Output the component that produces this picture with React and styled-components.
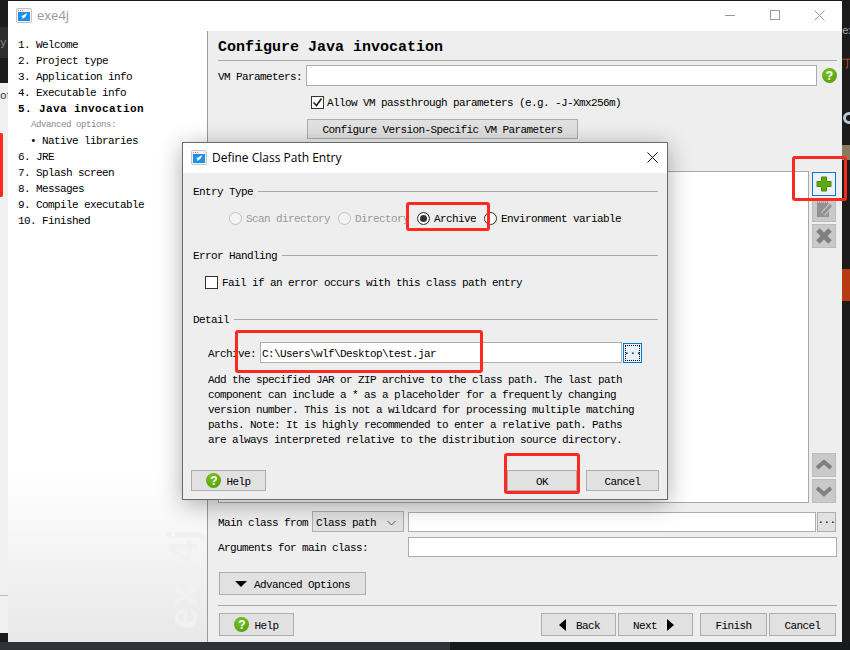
import * as React from 'react';
import styled, { createGlobalStyle } from 'styled-components';

const GlobalStyle = createGlobalStyle`
  * { box-sizing: border-box; }
  html, body { margin: 0; padding: 0; background: #1b1b1b; }
  body { font-family: 'Liberation Mono', monospace; font-size: 11px; letter-spacing: -0.6px; color: #000; }
`;

const steps = [
  { text: '1. Welcome' },
  { text: '2. Project type' },
  { text: '3. Application info' },
  { text: '4. Executable info' },
  { text: '5. Java invocation', kind: 'active' },
  { text: 'Advanced options:', kind: 'hint' },
  { text: '• Native libraries', kind: 'sub' },
  { text: '6. JRE' },
  { text: '7. Splash screen' },
  { text: '8. Messages' },
  { text: '9. Compile executable' },
  { text: '10. Finished' },
];

const helpText = [
  'Add the specified JAR or ZIP archive to the class path. The last path',
  'component can include a * as a placeholder for a frequently changing',
  'version number. This is not a wildcard for processing multiple matching',
  'paths. Note: It is highly recommended to enter a relative path. Paths',
  'are always interpreted relative to the distribution source directory.',
];

const AppIcon = () => (
  <svg width="16" height="15" viewBox="0 0 16 15">
    <rect x="0.5" y="0.5" width="15" height="14" rx="1" fill="#f4f4f4" stroke="#c4c4c4" />
    <rect x="2" y="4" width="12" height="9" fill="#1e90e8" />
    <rect x="2" y="2" width="1" height="1" fill="#e8705a" />
    <rect x="4" y="2" width="1" height="1" fill="#e8705a" />
    <rect x="6" y="2" width="1" height="1" fill="#e8705a" />
    <path d="M11 5 L7 7.5 L5 8 L6.5 9 L6 11 L8 10 L10 8 Z" fill="#fff" />
  </svg>
);

const WindowControls = () => (
  <Controls>
    <ControlSlot>
      <svg width="10" height="10" viewBox="0 0 10 10"><path d="M0 5.5H10" stroke="#999" /></svg>
    </ControlSlot>
    <ControlSlot>
      <svg width="10" height="10" viewBox="0 0 10 10"><rect x="0.5" y="0.5" width="9" height="9" fill="none" stroke="#999" /></svg>
    </ControlSlot>
    <ControlSlot>
      <svg width="11" height="11" viewBox="0 0 11 11"><path d="M0.5 0.5L10.5 10.5M10.5 0.5L0.5 10.5" stroke="#999" /></svg>
    </ControlSlot>
  </Controls>
);

const PlusIcon = () => (
  <svg width="16" height="16" viewBox="0 0 16 16">
    <path d="M5.5 1H10.5V5.5H15V10.5H10.5V15H5.5V10.5H1V5.5H5.5Z" fill="#5fa915" stroke="#4b8c0c" />
  </svg>
);

const EditIcon = () => (
  <svg width="18" height="18" viewBox="0 0 18 18">
    <rect x="2" y="2" width="12" height="14" fill="#939393" />
    <path d="M2 1.5H14" stroke="#939393" strokeDasharray="1 1" strokeWidth="2" />
    <path d="M16 4L8 13" stroke="#c8c8c8" strokeWidth="5" />
    <path d="M16 4L8 13" stroke="#939393" strokeWidth="3" />
  </svg>
);

const CrossIcon = () => (
  <svg width="18" height="18" viewBox="0 0 18 18">
    <path d="M3 3L15 15M15 3L3 15" stroke="#808080" strokeWidth="5" />
  </svg>
);

const ChevronIcon = ({ down }) => (
  <svg width="18" height="12" viewBox="0 0 18 12">
    <path d={down ? 'M2 3L9 9L16 3' : 'M2 9L9 3L16 9'} fill="none" stroke="#808080" strokeWidth="4" />
  </svg>
);

const SmallChevron = () => (
  <svg width="9" height="6" viewBox="0 0 9 6">
    <path d="M0.5 1L4.5 5L8.5 1" fill="none" stroke="#555" />
  </svg>
);

const Check = () => (
  <svg width="11" height="11" viewBox="0 0 11 11">
    <path d="M1.5 5.5L4.5 8.5L9.5 1.5" fill="none" stroke="#222" strokeWidth="1.6" />
  </svg>
);

const App = () => (
  <>
    <GlobalStyle />
    <Screen>
      <LeftStrip>
        <StripBlock $h={27} $bg="#1c1c1c" />
        <StripBlock $h={31} $bg="#2d2d2d"><StripText $color="#888">y</StripText></StripBlock>
        <StripBlock $h={25} $bg="#1c1c1c" />
        <StripLight>
          <StripText $color="#333">ot</StripText>
          <RedMark />
        </StripLight>
        <StripBlock $h={37} $bg="#f0f0f0" />
        <StripBlock $h={9} $bg="#1a1a1a" />
      </LeftStrip>

      <Window>
        <TitleBar>
          <AppIcon />
          <WindowTitle>exe4j</WindowTitle>
          <WindowControls />
        </TitleBar>
        <Body>
          <Sidebar>
            {steps.map((s) => (
              <Step key={s.text} $kind={s.kind}>{s.text}</Step>
            ))}
            <Watermark>exe4j</Watermark>
          </Sidebar>

          <Main>
            <Heading>Configure Java invocation</Heading>
            <VmRow>
              <VmLabel>VM Parameters:</VmLabel>
              <Field $w={511} $h={21} />
              <VmHelp>?</VmHelp>
            </VmRow>
            <PassRow>
              <CheckBox><Check /></CheckBox>
              <RowText>Allow VM passthrough parameters (e.g. -J-Xmx256m)</RowText>
            </PassRow>
            <ConfigButton>Configure Version-Specific VM Parameters</ConfigButton>

            <ClassPathRow>
              <ClassPathBox />
              <SideButtons>
                <SideButton $active><PlusIcon /></SideButton>
                <SideButton><EditIcon /></SideButton>
                <SideButton><CrossIcon /></SideButton>
                <SideSpacer />
                <SideButton><ChevronIcon /></SideButton>
                <SideButton><ChevronIcon down /></SideButton>
              </SideButtons>
            </ClassPathRow>

            <MainClassRow>
              <MainClassLabel>Main class from</MainClassLabel>
              <SelectBox>
                Class path
                <SmallChevron />
              </SelectBox>
              <Field $w={408} $h={20} />
              <DotsButton>...</DotsButton>
            </MainClassRow>
            <ArgsRow>
              <ArgsLabel>Arguments for main class:</ArgsLabel>
              <Field $w={429} $h={20} />
            </ArgsRow>

            <AdvancedButton>
              <Arrow $dir="down" />
              Advanced Options
            </AdvancedButton>
            <Separator />

            <Footer>
              <PushButton $w={75} $h={23}><ButtonHelp>?</ButtonHelp>Help</PushButton>
              <FooterRight>
                <PushButton $w={75} $h={23}><Arrow $dir="left" />Back</PushButton>
                <PushButton $w={75} $h={23}>Next<Arrow $dir="right" /></PushButton>
                <FinishGroup>
                  <PushButton $w={67} $h={23}>Finish</PushButton>
                  <PushButton $w={67} $h={23}>Cancel</PushButton>
                </FinishGroup>
              </FooterRight>
            </Footer>
          </Main>
        </Body>
      </Window>

      <RightStrip>
        <RightText $top={24} $color="#aaa">ex</RightText>
        <RightText $top={19} $color="#d8502a">丁</RightText>
        <RoundMark />
        <TanMark />
        <OrangeBlock />
      </RightStrip>

      <BottomStrip />

      <Dialog>
        <DialogTitleBar>
          <AppIcon />
          <DialogTitle>Define Class Path Entry</DialogTitle>
          <DialogClose>
            <svg width="11" height="11" viewBox="0 0 11 11"><path d="M0.5 0.5L10.5 10.5M10.5 0.5L0.5 10.5" stroke="#111" /></svg>
          </DialogClose>
        </DialogTitleBar>
        <DialogBody>
          <SectionHead>Entry Type</SectionHead>
          <RadioRow>
            <Radio $disabled /><RadioLabel $disabled>Scan directory</RadioLabel>
            <Radio $disabled /><RadioLabel $disabled>Directory</RadioLabel>
            <Radio $checked /><RadioLabel>Archive</RadioLabel>
            <Radio /><RadioLabel>Environment variable</RadioLabel>
          </RadioRow>

          <SectionHead $gap>Error Handling</SectionHead>
          <FailRow>
            <CheckBox />
            <RowText>Fail if an error occurs with this class path entry</RowText>
          </FailRow>

          <SectionHead $gap>Detail</SectionHead>
          <ArchiveRow>
            <ArchiveLabel>Archive:</ArchiveLabel>
            <ArchiveInput>C:\Users\wlf\Desktop\test.jar</ArchiveInput>
            <BrowseButton><BrowseInner>...</BrowseInner></BrowseButton>
          </ArchiveRow>
          <HelpBlock>
            {helpText.map((line) => <HelpLine key={line}>{line}</HelpLine>)}
          </HelpBlock>
          <DialogFooter>
            <PushButton $w={75} $h={21}><ButtonHelp>?</ButtonHelp>Help</PushButton>
            <DialogActions>
              <PushButton $w={70} $h={21}>OK</PushButton>
              <PushButton $w={73} $h={21}>Cancel</PushButton>
            </DialogActions>
          </DialogFooter>
        </DialogBody>
      </Dialog>

      <RedBox $x={792} $y={156} $w={55} $h={45} />
      <RedBox $x={406} $y={202} $w={84} $h={29} />
      <RedBox $x={235} $y={330} $w={248} $h={43} />
      <RedBox $x={504} $y={453} $w={76} $h={41} />
    </Screen>
  </>
);

export default App;

const Screen = styled.div`
  position: relative;
  width: 850px;
  height: 650px;
  overflow: hidden;
  display: grid;
  grid-template-columns: 8px 834px 8px;
  grid-template-rows: 642px 8px;
  background: #1b1b1b;
`;

const LeftStrip = styled.div`
  display: flex;
  flex-direction: column;
  overflow: hidden;
`;

const StripBlock = styled.div`
  height: ${(p) => p.$h}px;
  background: ${(p) => p.$bg};
  display: flex;
  align-items: center;
  flex: none;
`;

const StripLight = styled.div`
  height: 513px;
  flex: none;
  padding-top: 6px;
  background: #f0f0f0;
  border-bottom: 1px solid #b8b8b8;
`;

const StripText = styled.span`
  color: ${(p) => p.$color};
  line-height: 14px;
  white-space: nowrap;
`;

const RedMark = styled.div`
  width: 3px;
  height: 64px;
  margin-top: 30px;
  background: #fa2a20;
  border-radius: 0 2px 2px 0;
`;

const Window = styled.div`
  margin-top: 1px;
  display: flex;
  flex-direction: column;
  background: #eee;
`;

const TitleBar = styled.div`
  height: 30px;
  flex: none;
  display: flex;
  align-items: center;
  padding: 0 0 2px 8px;
  background: #fff;
`;

const WindowTitle = styled.span`
  margin-left: 5px;
  font-family: 'Open Sans', sans-serif;
  font-size: 13px;
  letter-spacing: 0;
  color: #999;
`;

const Controls = styled.div`
  margin-left: auto;
  display: flex;
`;

const ControlSlot = styled.div`
  width: 45px;
  height: 26px;
  display: flex;
  align-items: center;
  justify-content: center;
`;

const Body = styled.div`
  flex: 1;
  display: flex;
  min-height: 0;
`;

const Sidebar = styled.div`
  width: 200px;
  flex: none;
  display: flex;
  flex-direction: column;
  padding: 6px 0 13px 10px;
  background: linear-gradient(#fff 72%, #e8e8e8);
  border-right: 1px solid #9a9a9a;
`;

const Step = styled.div`
  height: 16px;
  line-height: 16px;
  white-space: pre;
  ${(p) => p.$kind === 'active' && 'font-weight: 700; letter-spacing: 0.4px;'}
  ${(p) => p.$kind === 'hint' && 'padding-left: 13px; font-size: 9px; letter-spacing: -0.4px; color: #888;'}
  ${(p) => p.$kind === 'sub' && 'padding-left: 12px;'}
`;

const Watermark = styled.div`
  margin-top: auto;
  margin-right: 8px;
  align-self: flex-end;
  writing-mode: vertical-rl;
  transform: rotate(180deg);
  font-family: 'Liberation Sans', sans-serif;
  font-size: 40px;
  font-weight: 700;
  letter-spacing: 0;
  line-height: 32px;
  color: #f1f1f1;
`;

const Main = styled.div`
  width: 634px;
  min-width: 0;
  flex: none;
  display: flex;
  flex-direction: column;
  padding: 5px 5px 0 10px;
`;

const Heading = styled.div`
  height: 25px;
  padding-top: 2px;
  line-height: 20px;
  font-size: 15px;
  font-weight: 700;
  letter-spacing: 0;
  border-bottom: 1px solid #a8a8a8;
`;

const VmRow = styled.div`
  margin-top: 4px;
  display: flex;
  align-items: center;
`;

const RowLabel = styled.label`
  padding-top: 2px;
`;

const VmLabel = styled(RowLabel)`
  width: 88px;
`;

const Field = styled.div`
  width: ${(p) => p.$w}px;
  height: ${(p) => p.$h}px;
  flex: none;
  background: #fff;
  border: 1px solid #adadad;
`;

const HelpIcon = styled.span`
  width: 15px;
  height: 15px;
  flex: none;
  display: inline-flex;
  align-items: center;
  justify-content: center;
  border-radius: 50%;
  background: radial-gradient(circle at 40% 30%, #7cc31e, #4a980a);
  font-family: 'Liberation Sans', sans-serif;
  font-size: 12px;
  font-weight: 700;
  letter-spacing: 0;
  color: #fff;
`;

const VmHelp = styled(HelpIcon)`
  margin-left: 5px;
`;

const ButtonHelp = styled(HelpIcon)`
  margin: -2px 5px 0 0;
`;

const CheckBox = styled.span`
  width: 13px;
  height: 13px;
  flex: none;
  display: inline-flex;
  align-items: center;
  justify-content: center;
  background: #fff;
  border: 1px solid #333;
`;

const RowText = styled.span`
  padding-top: 2px;
  white-space: nowrap;
`;

const PassRow = styled.div`
  margin-top: 9px;
  padding-left: 93px;
  height: 14px;
  display: flex;
  align-items: center;
  gap: 3px;
`;

const PushButton = styled.div`
  width: ${(p) => p.$w}px;
  height: ${(p) => p.$h}px;
  flex: none;
  padding-top: 2px;
  display: flex;
  align-items: center;
  justify-content: center;
  background: #e1e1e1;
  border: 1px solid #adadad;
`;

const ConfigButton = styled(PushButton)`
  width: 271px;
  height: 20px;
  margin: 10px 0 0 89px;
`;

const ClassPathRow = styled.div`
  margin-top: 32px;
  height: 332px;
  display: flex;
  gap: 3px;
`;

const ClassPathBox = styled.div`
  width: 591px;
  background: #fff;
  border: 1px solid #a8a8a8;
`;

const SideButtons = styled.div`
  width: 24px;
  padding-top: 1px;
  display: flex;
  flex-direction: column;
  gap: 2px;
`;

const SideSpacer = styled.div`
  flex: 1;
`;

const SideButton = styled.div`
  width: 24px;
  height: 24px;
  flex: none;
  display: flex;
  align-items: center;
  justify-content: center;
  background: ${(p) => (p.$active ? '#f0f0f0' : '#c9c9c9')};
  border: 1px solid ${(p) => (p.$active ? '#0078d7' : '#bcbcbc')};
`;

const MainClassRow = styled.div`
  margin-top: 8px;
  display: flex;
  align-items: center;
`;

const MainClassLabel = styled(RowLabel)`
  width: 94px;
`;

const SelectBox = styled.div`
  width: 92px;
  height: 21px;
  margin-right: 4px;
  padding: 2px 7px 0 3px;
  display: flex;
  align-items: center;
  justify-content: space-between;
  background: #e1e1e1;
  border: 1px solid #adadad;
`;

const DotsButton = styled.div`
  width: 19px;
  height: 20px;
  margin-left: 1px;
  padding-bottom: 3px;
  display: flex;
  align-items: center;
  justify-content: center;
  background: #e1e1e1;
  border: 1px solid #adadad;
`;

const ArgsRow = styled.div`
  margin-top: 5px;
  display: flex;
  align-items: center;
`;

const ArgsLabel = styled(RowLabel)`
  width: 190px;
`;

const AdvancedButton = styled(PushButton)`
  width: 147px;
  height: 23px;
  margin: 15px 0 0 1px;
  gap: 7px;
`;

const Arrow = styled.span`
  width: 0;
  height: 0;
  flex: none;
  margin-top: -2px;
  ${(p) => p.$dir === 'down' && 'border-left: 6px solid transparent; border-right: 6px solid transparent; border-top: 6px solid #000;'}
  ${(p) => p.$dir === 'left' && 'margin-left: 2px; margin-right: 10px; border-top: 6px solid transparent; border-bottom: 6px solid transparent; border-right: 7px solid #000;'}
  ${(p) => p.$dir === 'right' && 'margin-left: 10px; margin-right: 4px; border-top: 6px solid transparent; border-bottom: 6px solid transparent; border-left: 7px solid #000;'}
`;

const Separator = styled.div`
  margin-top: 10px;
  border-top: 1px solid #a8a8a8;
`;

const Footer = styled.div`
  margin-top: 7px;
  padding: 0 1px;
  display: flex;
  justify-content: space-between;
`;

const FooterRight = styled.div`
  display: flex;
  gap: 2px;
`;

const FinishGroup = styled.div`
  margin-left: 5px;
  display: flex;
  gap: 2px;
`;

const RightStrip = styled.div`
  display: flex;
  flex-direction: column;
  overflow: hidden;
  background: #1b1b1b;
`;

const RightText = styled.span`
  margin-top: ${(p) => p.$top}px;
  line-height: 14px;
  white-space: nowrap;
  color: ${(p) => p.$color};
`;

const RoundMark = styled.div`
  width: 12px;
  height: 12px;
  margin: 41px 0 0 1px;
  flex: none;
  border-radius: 50%;
  border: 3px solid #b9c9d6;
`;

const TanMark = styled.div`
  width: 8px;
  height: 15px;
  margin-top: 21px;
  flex: none;
  background: #8a7a60;
`;

const OrangeBlock = styled.div`
  height: 32px;
  margin-top: 109px;
  flex: none;
  background: #b63a12;
`;

const BottomStrip = styled.div`
  grid-column: 1 / 4;
  background: linear-gradient(90deg, #2f3237 450px, #17191a 450px);
`;

const Dialog = styled.div`
  position: absolute;
  left: 182px;
  top: 142px;
  width: 486px;
  height: 358px;
  display: flex;
  flex-direction: column;
  background: #eee;
  border: 1px solid #6a6a6a;
  box-shadow: 0 4px 22px rgba(0, 0, 0, 0.32);
`;

const DialogTitleBar = styled.div`
  height: 30px;
  flex: none;
  display: flex;
  align-items: center;
  padding: 0 0 2px 8px;
  background: #fff;
`;

const DialogTitle = styled.span`
  margin-left: 5px;
  font-family: 'Open Sans', sans-serif;
  font-size: 12px;
  letter-spacing: 0;
  color: #000;
`;

const DialogClose = styled.div`
  margin-left: auto;
  width: 30px;
  display: flex;
  justify-content: center;
`;

const DialogBody = styled.div`
  flex: 1;
  display: flex;
  flex-direction: column;
  padding: 10px 9px 0 10px;
`;

const SectionHead = styled.div`
  height: 16px;
  margin-top: ${(p) => (p.$gap ? 21 : 0)}px;
  padding-top: 2px;
  display: flex;
  align-items: center;
  gap: 5px;
  white-space: nowrap;

  &::after {
    content: '';
    flex: 1;
    margin-top: -2px;
    border-top: 1px solid #a8a8a8;
  }
`;

const RadioRow = styled.div`
  height: 16px;
  margin-top: 11px;
  padding-left: 36px;
  display: flex;
  align-items: center;
`;

const Radio = styled.span`
  width: 13px;
  height: 13px;
  flex: none;
  border-radius: 50%;
  background: ${(p) => (p.$disabled ? '#f4f4f4' : '#fff')};
  border: 1px solid ${(p) => (p.$disabled ? '#c0c0c0' : '#333')};
  ${(p) => p.$checked && 'box-shadow: inset 0 0 0 2px #fff, inset 0 0 0 7px #333;'}
`;

const RadioLabel = styled.span`
  margin: 0 8px 0 4px;
  padding-top: 2px;
  white-space: nowrap;
  color: ${(p) => (p.$disabled ? '#999' : '#000')};
`;

const FailRow = styled.div`
  height: 16px;
  margin-top: 11px;
  padding-left: 12px;
  display: flex;
  align-items: center;
  gap: 4px;
`;

const ArchiveRow = styled.div`
  margin-top: 15px;
  padding-left: 15px;
  display: flex;
  align-items: center;
`;

const ArchiveLabel = styled(RowLabel)`
  width: 52px;
`;

const ArchiveInput = styled.div`
  width: 362px;
  height: 21px;
  padding: 2px 0 0 1px;
  display: flex;
  align-items: center;
  background: #fff;
  border: 1px solid #adadad;
`;

const BrowseButton = styled.div`
  width: 19px;
  height: 20px;
  margin-left: 1px;
  padding: 1px;
  background: #e5f1fb;
  border: 1px solid #0078d7;
`;

const BrowseInner = styled.div`
  height: 100%;
  padding-bottom: 3px;
  display: flex;
  align-items: center;
  justify-content: center;
  border: 1px dotted #000;
`;

const HelpBlock = styled.div`
  height: 71px;
  margin-top: 10px;
  padding-left: 15px;
  overflow: hidden;
`;

const HelpLine = styled.div`
  height: 15px;
  line-height: 15px;
  white-space: pre;
`;

const DialogFooter = styled.div`
  margin: 26px -1px 0 -2px;
  display: flex;
  justify-content: space-between;
`;

const DialogActions = styled.div`
  display: flex;
  gap: 9px;
`;

const RedBox = styled.div`
  position: absolute;
  left: ${(p) => p.$x}px;
  top: ${(p) => p.$y}px;
  width: ${(p) => p.$w}px;
  height: ${(p) => p.$h}px;
  border: 3px solid #fa2a20;
  border-radius: 3px;
`;
